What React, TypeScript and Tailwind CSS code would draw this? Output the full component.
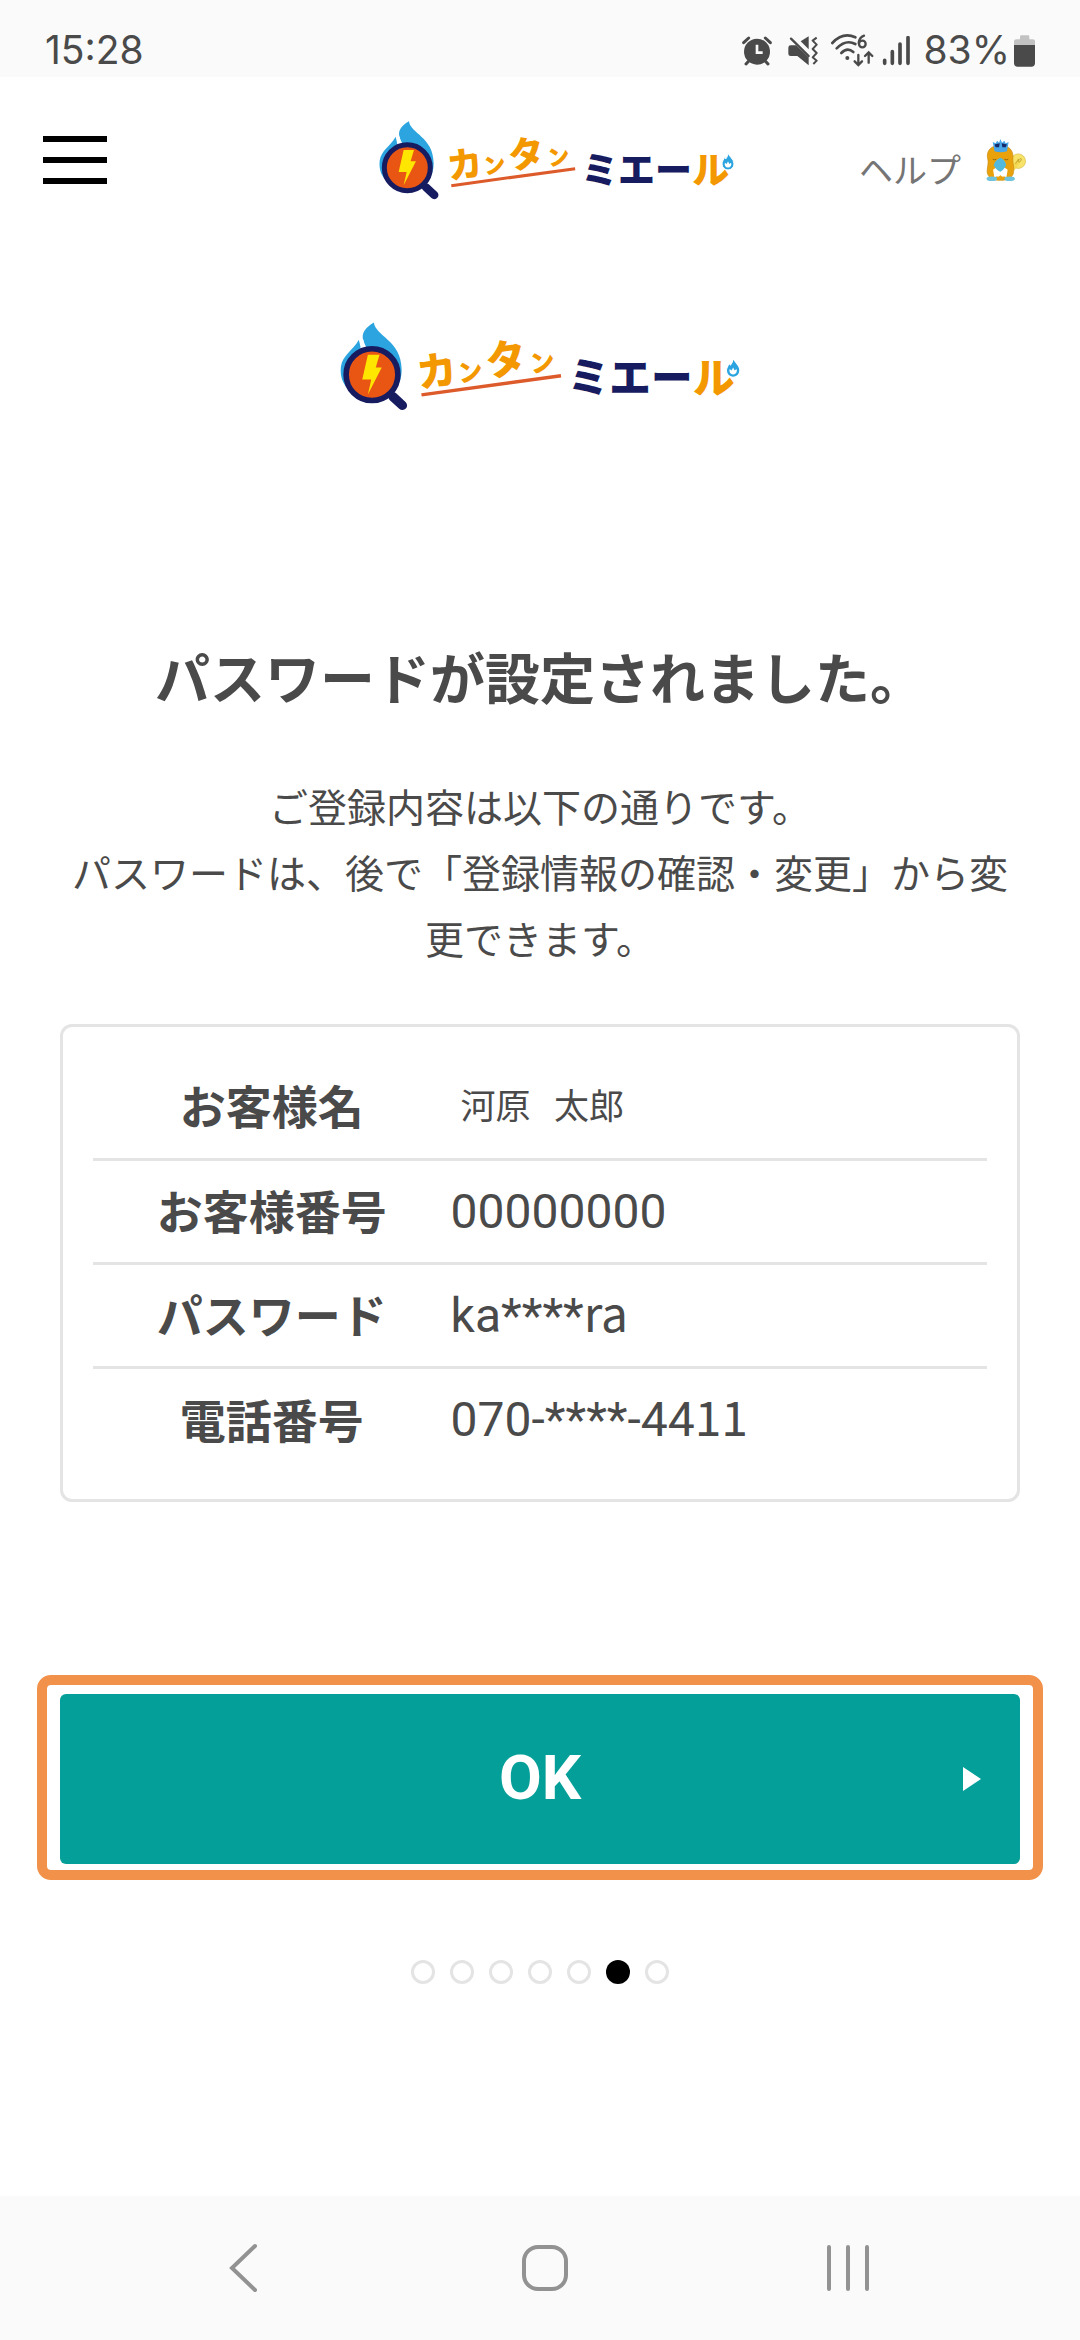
const ROWS = [
  { label: "お客様番号", value: "00000000", tail: "" },
  { label: "パスワード", value: "ka****", tail: "ra" },
  { label: "電話番号", value: "070-****-44", tail: "11" },
];

const STEPS = [1, 2, 3, 4, 5, 6, 7];
const CURRENT_STEP = 6;

function Logo({ className }: { className: string }) {
  return (
    <svg
      viewBox="50 60 1072 240"
      className={className}
      role="img"
      aria-label="カンタンミエール"
    >
      {/* flame */}
      <path
        d="M143 64C147 100 216 112 217 188C218 216 207 236 192 252L116 140C122 130 118 121 115 112C108 92 122 76 143 64Z"
        fill="#2ba4e0"
      />
      <path
        d="M103 110C104 118 109 126 107 138L84 246C62 236 52 210 55 182C60 150 86 140 103 110Z"
        fill="#2ba4e0"
      />
      <path d="M112 110Q114 124 122 132" fill="none" stroke="#fff" strokeWidth="5" />
      {/* magnifier */}
      <path
        d="M194 262L219 285"
        stroke="#171c61"
        strokeWidth="25"
        strokeLinecap="round"
      />
      <path d="M180 248L200 268" stroke="#171c61" strokeWidth="12" />
      <circle
        cx="138"
        cy="203"
        r="69"
        fill="#e95513"
        stroke="#171c61"
        strokeWidth="15"
      />
      <path
        d="M127 150H158L148 184H164L127 256L136 216H112Z"
        fill="#ffe600"
      />
      {/* wordmark */}
      <g className="font-['Noto_Sans_CJK_JP',sans-serif] font-black">
        <g transform="rotate(-8 270 257)" fill="#f39800">
          <text x="266" y="238" fontSize="106">
            カ
          </text>
          <text x="374" y="238" fontSize="66">
            ン
          </text>
          <text x="452" y="234" fontSize="108">
            タ
          </text>
          <text x="568" y="240" fontSize="66">
            ン
          </text>
        </g>
        <path d="M270 257L642 206" stroke="#dd5a2b" strokeWidth="9" />
        <text x="660" y="253" fontSize="111" fill="#171c61">
          ミエー
        </text>
        <text x="994" y="253" fontSize="111" fill="#f39800">
          ル
        </text>
      </g>
      <path
        d="M1101 157C1103 170 1119 176 1119 192A18 18 0 0 1 1083 192C1083 184 1088 180 1090 172L1094 177C1098 172 1101 166 1101 157Z"
        fill="#2ba4e0"
        stroke="#fff"
        strokeWidth="3"
      />
      <path
        d="M1092 188L1097 192L1101 184L1105 192L1110 188A10 10 0 1 1 1092 188Z"
        fill="#fff"
      />
    </svg>
  );
}

function Mascot() {
  return (
    <svg viewBox="792 414 126 136" className="h-[45px] w-[42px]" aria-hidden="true">
      <circle cx="892" cy="484" r="22" fill="#f7e36a" stroke="#d9b93c" strokeWidth="2" />
      <path d="M872 500L892 476L900 484L880 512Z" fill="#f3d94f" />
      <path
        d="M884 492C892 476 906 472 900 482C896 490 888 486 892 478"
        fill="none"
        stroke="#a98a22"
        strokeWidth="2"
      />
      <path
        d="M838 436C864 436 878 452 876 474C874 486 880 500 878 516C876 534 862 542 838 542C814 542 800 534 798 516C798 500 804 490 799 474C796 450 812 436 838 436Z"
        fill="#e9a20c"
        stroke="#c98a10"
        strokeWidth="2"
      />
      <path d="M816 510C824 500 852 500 860 510L856 534C850 526 844 536 838 526C832 536 828 526 820 534Z" fill="#fff" />
      <path d="M838 474C848 478 855 488 855 496C850 508 842 514 838 516C832 514 822 506 818 496C820 486 828 478 838 474Z" fill="#53b9dd" />
      <path d="M815 478Q821 482 826 478M850 478Q856 482 862 478" fill="none" stroke="#6b4a08" strokeWidth="2" />
      <ellipse cx="812" cy="537" rx="16" ry="7" fill="#6fc3dc" />
      <ellipse cx="866" cy="537" rx="16" ry="7" fill="#6fc3dc" />
      <path d="M815 426L824 430L828 422L834 428L838 417L843 428L850 422L854 430L863 426L858 454Q838 460 820 454Z" fill="#4aa8e8" />
      <path d="M820 434L836 430L834 442H824ZM842 430L858 434L854 442H844Z" fill="#152a6b" />
    </svg>
  );
}

function StatusBar() {
  return (
    <div className="flex h-[77px] items-center bg-[#fafafa] px-[45px] pt-6 font-[Inter,sans-serif] text-[39px] text-[#4a4a4a]">
      <span className="grow">15:28</span>
      <svg viewBox="58 108 90 90" className="mr-4 size-[30px]" aria-hidden="true">
        <circle cx="103" cy="155" r="39" fill="#4a4a4a" />
        <path
          d="M63 128L78 114M143 128L128 114M79 182L70 192M127 182L136 192"
          stroke="#4a4a4a"
          strokeWidth="9"
          strokeLinecap="round"
        />
        <path d="M103 134V158H120" fill="none" stroke="#fafafa" strokeWidth="8" />
      </svg>
      <svg viewBox="194 108 90 90" className="mr-3 size-[30px]" aria-hidden="true">
        <path d="M232 124L256 109V148Z" fill="#4a4a4a" />
        <path d="M202 136H218L256 172V196L222 168H202Q195 168 195 161V143Q195 136 202 136Z" fill="#4a4a4a" />
        <path d="M203 116L256 168" stroke="#4a4a4a" strokeWidth="7" strokeLinecap="round" />
        <path
          d="M280 113L268 122L280 134L268 147L280 159L268 172L280 182L270 192"
          fill="none"
          stroke="#4a4a4a"
          strokeWidth="6"
          strokeLinejoin="round"
        />
      </svg>
      <svg viewBox="326 104 132 99" className="mr-2 h-[33px] w-11" aria-hidden="true">
        <g fill="none" stroke="#4a4a4a" strokeWidth="8" strokeLinecap="round">
          <path d="M333 131Q365 97 402 114" />
          <path d="M346 147Q374 119 402 134" />
          <path d="M360 161Q378 143 396 158" />
          <circle cx="423" cy="134" r="10" strokeWidth="7" />
          <path d="M412 131Q414 114 428 109" strokeWidth="7" />
          <path d="M411 167V196M400 186L411 197L422 186" strokeWidth="7" />
          <path d="M442 190V160M431 170L442 159L453 170" strokeWidth="7" />
        </g>
        <circle cx="378" cy="176" r="6" fill="#4a4a4a" />
      </svg>
      <svg viewBox="484 108 87 90" className="mr-3 h-[30px] w-[29px]" aria-hidden="true">
        <path
          d="M492 181V190M515 155V190M538 132V190M562 113V190"
          stroke="#4a4a4a"
          strokeWidth="11"
          strokeLinecap="round"
        />
      </svg>
      <span>83%</span>
      <svg viewBox="882 104 63 96" className="ml-1 h-8 w-[21px]" aria-hidden="true">
        <path d="M882 135V124Q882 117 890 117H900V109Q900 105 904 105H924Q928 105 928 109V117H937Q945 117 945 124V135Z" fill="#c2c2c2" />
        <path d="M882 134H945V188Q945 199 934 199H893Q882 199 882 188Z" fill="#4a4a4a" />
      </svg>
    </div>
  );
}

function Header() {
  return (
    <header className="flex h-[166px] items-center px-[43px]">
      <button
        type="button"
        aria-label="メニュー"
        className="flex w-16 flex-col gap-[15px]"
      >
        <span className="h-[6px] w-full bg-black" />
        <span className="h-[6px] w-full bg-black" />
        <span className="h-[6px] w-full bg-black" />
      </button>
      <div className="flex grow justify-end">
        <Logo className="h-20 w-[357px]" />
      </div>
      <a
        href="#help"
        className="ml-[124px] flex items-center gap-6 pr-[10px] text-[34px] text-[#757575]"
      >
        <span className="pt-4">ヘルプ</span>
        <Mascot />
      </a>
    </header>
  );
}

function NavBar() {
  return (
    <nav className="mt-auto flex h-36 items-center justify-between bg-[#fafafa] pr-[209px] pl-[226px] text-[#929292]">
      <button type="button" aria-label="戻る">
        <svg viewBox="0 0 38 52" className="h-[52px] w-[38px]">
          <path
            d="M29 4L6 26L29 48"
            fill="none"
            stroke="currentColor"
            strokeWidth="4"
            strokeLinecap="round"
          />
        </svg>
      </button>
      <button type="button" aria-label="ホーム">
        <svg viewBox="0 0 48 48" className="size-12">
          <rect
            x="3"
            y="3"
            width="42"
            height="42"
            rx="14"
            fill="none"
            stroke="currentColor"
            strokeWidth="4"
          />
        </svg>
      </button>
      <button type="button" aria-label="履歴">
        <svg viewBox="0 0 46 48" className="h-12 w-[46px]">
          <path
            d="M4 3V45M23 3V45M42 3V45"
            stroke="currentColor"
            strokeWidth="4"
            strokeLinecap="round"
          />
        </svg>
      </button>
    </nav>
  );
}

function App() {
  return (
    <div className="flex min-h-screen flex-col bg-white font-['Noto_Sans_CJK_JP',sans-serif] text-[#4a4a4a]">
      <StatusBar />
      <Header />
      <main className="flex flex-col px-[37px]">
        <Logo className="mx-auto mt-[78px] h-[90px] w-[404px]" />
        <h1 className="mt-[222px] text-center text-[55px] leading-[84px] font-bold">
          パスワードが設定されました。
        </h1>
        <p className="mx-[23px] mt-[55px] text-center text-[39px] leading-[66px]">
          ご登録内容は以下の通りです。
          <br />
          パスワードは、後で「登録情報の確認・変更」から変更できます。
        </p>

        <div className="mx-[23px] mt-[54px] rounded-xl border-[3px] border-[#e4e4e4] px-[30px] py-7">
          <table className="w-full table-fixed border-collapse">
            <tbody className="divide-y-[3px] divide-[#e4e4e4]">
              <tr className="h-[104px]">
                <th scope="row" className="w-2/5 pb-1 text-[46px] leading-[60px] font-bold">
                  お客様名
                </th>
                <td className="pb-1 pl-[10px] text-[35px] whitespace-pre">河原   太郎</td>
              </tr>
              {ROWS.map((row) => (
                <tr key={row.label} className="h-[104px]">
                  <th scope="row" className="pb-1 text-[46px] leading-[60px] font-bold">
                    {row.label}
                  </th>
                  <td className="pb-1 font-[Roboto,sans-serif] text-[48px] leading-[60px]">
                    {row.value}
                    <span className="font-['Noto_Sans_CJK_JP',sans-serif]">
                      {row.tail}
                    </span>
                  </td>
                </tr>
              ))}
            </tbody>
          </table>
        </div>

        <div className="mt-[173px] rounded-[14px] border-[10px] border-[#f29149] px-[13px] pt-[9px] pb-[6px]">
          <button
            type="button"
            className="relative block h-[170px] w-full rounded-md bg-[#049f98] pb-1 font-[Roboto,sans-serif] text-[62px] font-bold text-white"
          >
            OK
            <svg
              viewBox="0 0 18 24"
              className="absolute top-[73px] right-[39px] h-6 w-[18px]"
              aria-hidden="true"
            >
              <path d="M0 0L18 12L0 24Z" fill="currentColor" />
            </svg>
          </button>
        </div>

        <ol className="mt-20 flex justify-center gap-[15px]">
          {STEPS.map((step) => (
            <li
              key={step}
              className={
                step === CURRENT_STEP
                  ? "size-6 rounded-full bg-black"
                  : "size-6 rounded-full border-[3px] border-[#e4e4e4]"
              }
            />
          ))}
        </ol>
      </main>
      <NavBar />
    </div>
  );
}

export default App;
